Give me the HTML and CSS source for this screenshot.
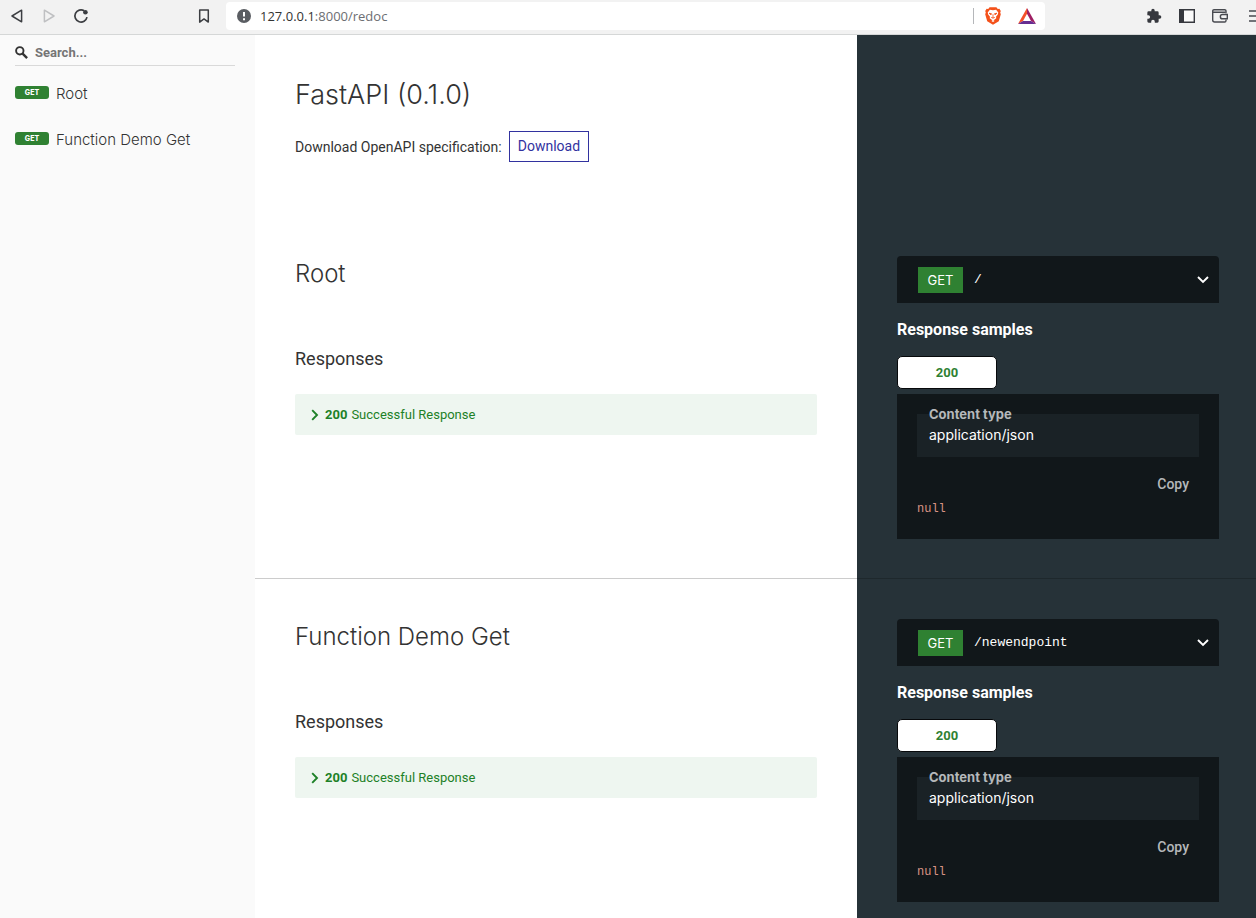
FILE: index.html
```html
<!DOCTYPE html>
<html lang="en">
<head>
<meta charset="utf-8">
<title>FastAPI - ReDoc</title>
<link rel="stylesheet" href="styles.css">
</head>
<body>
<header class="toolbar">
  <nav class="history" aria-label="Browser navigation">
    <button class="icon-btn" aria-label="Back"><svg width="16" height="16" viewBox="0 0 16 16"><path d="M12.6 2.2v11.6L3 8z" fill="none" stroke="#3c3e42" stroke-width="1.5" stroke-linejoin="round"/></svg></button>
    <button class="icon-btn" aria-label="Forward"><svg width="16" height="16" viewBox="0 0 16 16"><path d="M3.4 2.2v11.6L13 8z" fill="none" stroke="#bfc0c2" stroke-width="1.5" stroke-linejoin="round"/></svg></button>
    <button class="icon-btn" aria-label="Reload"><svg width="16" height="16" viewBox="0 0 16 16"><path d="M14 9.2A6.1 6.1 0 1 1 11.2 2.8" fill="none" stroke="#3c3e42" stroke-width="1.7"/><circle cx="12.4" cy="4.2" r="2.3" fill="#3c3e42"/></svg></button>
  </nav>
  <button class="icon-btn" aria-label="Bookmark"><svg width="16" height="16" viewBox="0 0 16 16"><path d="M3.7 2.1h8.6v12L8 10.9l-4.3 3.2z" fill="none" stroke="#3c3e42" stroke-width="1.5" stroke-linejoin="round"/></svg></button>
  <div class="address">
    <svg width="14" height="14" viewBox="0 0 14 14" aria-hidden="true"><circle cx="7" cy="7" r="7" fill="#5a5d62"/><path d="M7 3v4.6M7 9.3v1.9" stroke="#fff" stroke-width="2"/></svg>
    <span class="url">127.0.0.1<span class="url-path">:8000/redoc</span></span>
    <span class="divider"></span>
    <button class="icon-btn" aria-label="Brave Shields"><svg width="16" height="18" viewBox="0 0 16 18"><path d="M4.6.3h6.8l1.4 1.6 1.6-.1 1.4 2.3-.6 1.4.6 1.7-2 7.1L8 17.8l-5.8-3.5-2-7.1.6-1.7L.2 4.1l1.4-2.3 1.6.1z" fill="#f4511a"/><path d="M8 3.3l3.1-.6 2.2 2.7-.5 2.1-1.8 2.2.3 1.6-3.3 2.5-3.3-2.5.3-1.6-1.8-2.2-.5-2.1 2.2-2.7z" fill="#fff"/><path d="M4 6.2l2.5.5-.5 1.1zM12 6.2l-2.5.5.5 1.1zM8 7.2v3M6.2 10.4L8 11.2l1.8-.8" fill="#f4511a" stroke="#f4511a" stroke-width=".8"/><path d="M6.4 14l1.6-1 1.6 1L8 15z" fill="#fff"/></svg></button>
    <button class="icon-btn" aria-label="Brave Rewards"><svg width="18" height="16" viewBox="0 0 18 16"><path d="M9 0L0 16l5-3 4-7.2z" fill="#f4502a"/><path d="M9 0l9 16-5-3-4-7.2z" fill="#9e1f63"/><path d="M0 16l5-3h8l5 3z" fill="#662d91"/></svg></button>
  </div>
  <div class="tools">
    <button class="icon-btn" aria-label="Extensions"><svg width="16" height="16" viewBox="0 0 24 24"><path d="M20.5 11H19V7a2 2 0 0 0-2-2h-4V3.5a2.5 2.5 0 0 0-5 0V5H4a2 2 0 0 0-2 2v3.8h1.5a2.7 2.7 0 0 1 0 5.4H2V20a2 2 0 0 0 2 2h3.8v-1.5a2.7 2.7 0 0 1 5.4 0V22H17a2 2 0 0 0 2-2v-4h1.5a2.5 2.5 0 0 0 0-5z" fill="#36383e"/></svg></button>
    <button class="icon-btn" aria-label="Sidebar"><svg width="16" height="14" viewBox="0 0 16 14"><path d="M.7.7h14.6v12.6H.7z" fill="#fafafa" stroke="#36383e" stroke-width="1.4"/><path d="M0 0h5v14H0z" fill="#36383e"/></svg></button>
    <button class="icon-btn" aria-label="Wallet"><svg width="16" height="14" viewBox="0 0 16 14" fill="none" stroke="#484a50" stroke-width="1.4"><path d="M14 4.2V2A1.3 1.3 0 0 0 12.7.7H2A1.3 1.3 0 0 0 .7 2v9a2 2 0 0 0 2 2h10a1.3 1.3 0 0 0 1.3-1.2v-1M.7 3.2h12.5M10.5 5.5h4.8v4.3h-4.8a2.15 2.15 0 0 1 0-4.3z"/></svg></button>
    <button class="icon-btn menu-btn" aria-label="Menu"><svg width="7" height="14" viewBox="0 0 7 14"><path d="M0 2h7M0 7h7M0 12h7" stroke="#484a50" stroke-width="1.6"/></svg></button>
  </div>
</header>

<div class="page">
  <aside class="sidebar">
    <div class="search">
      <label for="search" aria-label="Search"><svg width="13" height="13" viewBox="0 0 13 13"><circle cx="4.8" cy="4.8" r="3.7" fill="none" stroke="#333" stroke-width="1.9"/><path d="M7.6 7.6l4.5 4.5" stroke="#333" stroke-width="2.4"/></svg></label>
      <input id="search" type="text" placeholder="Search...">
    </div>
    <nav class="menu" aria-label="Operations">
      <a class="menu-item" href="#root"><span class="badge">GET</span><span>Root</span></a>
      <a class="menu-item" href="#demo"><span class="badge">GET</span><span>Function Demo Get</span></a>
    </nav>
  </aside>

  <main class="content">
    <section class="row intro">
      <div class="doc">
        <h1>FastAPI (0.1.0)</h1>
        <p class="spec">Download OpenAPI specification: <a class="download" href="#openapi">Download</a></p>
      </div>
    </section>

    <section class="row operation" id="root">
      <div class="doc">
        <h2>Root</h2>
        <h3>Responses</h3>
        <button class="response"><svg width="8" height="12" viewBox="0 0 8 12"><path d="M1.2 1.2L6 6l-4.8 4.8" fill="none" stroke="#1d8127" stroke-width="1.9"/></svg><strong>200</strong><span>Successful Response</span></button>
      </div>
      <div class="samples">
        <button class="endpoint"><span class="verb">GET</span><span class="path">/</span><svg width="12" height="8" viewBox="0 0 12 8"><path d="M1 1l5 5 5-5" fill="none" stroke="#fff" stroke-width="1.9"/></svg></button>
        <h3>Response samples</h3>
        <button class="tab">200</button>
        <div class="panel">
          <div class="field"><span class="field-label">Content type</span>application/json</div>
          <button class="copy">Copy</button>
          <code class="json">null</code>
        </div>
      </div>
    </section>

    <section class="row operation" id="demo">
      <div class="doc">
        <h2>Function Demo Get</h2>
        <h3>Responses</h3>
        <button class="response"><svg width="8" height="12" viewBox="0 0 8 12"><path d="M1.2 1.2L6 6l-4.8 4.8" fill="none" stroke="#1d8127" stroke-width="1.9"/></svg><strong>200</strong><span>Successful Response</span></button>
      </div>
      <div class="samples">
        <button class="endpoint"><span class="verb">GET</span><span class="path">/newendpoint</span><svg width="12" height="8" viewBox="0 0 12 8"><path d="M1 1l5 5 5-5" fill="none" stroke="#fff" stroke-width="1.9"/></svg></button>
        <h3>Response samples</h3>
        <button class="tab">200</button>
        <div class="panel">
          <div class="field"><span class="field-label">Content type</span>application/json</div>
          <button class="copy">Copy</button>
          <code class="json">null</code>
        </div>
      </div>
    </section>
  </main>
</div>
</body>
</html>
```

FILE: styles.css
```css
* { box-sizing: border-box; }

body {
  margin: 0;
  height: 100vh;
  display: flex;
  flex-direction: column;
  overflow: hidden;
  background: #fff;
  color: #333;
  font-family: Roboto, sans-serif;
  font-size: 14px;
}

button {
  margin: 0;
  padding: 0;
  border: 0;
  background: none;
  font: inherit;
  color: inherit;
}

h1, h2, h3, p { margin: 0; }
svg { display: block; flex: none; }

/* Browser toolbar */
.toolbar {
  flex: none;
  height: 35px;
  display: flex;
  align-items: center;
  padding-bottom: 2px;
  background: #f2f2f2;
  border-bottom: 1px solid #d5d7d7;
}

.history { display: flex; gap: 16px; padding-left: 9px; margin-right: 107px; }

.address {
  flex: 1;
  height: 28px;
  display: flex;
  align-items: center;
  margin-left: 14px;
  padding: 0 9px 0 11px;
  border-radius: 4px;
  background: #fff;
}

.url {
  flex: 1;
  margin-left: 9px;
  font-family: "Open Sans", sans-serif;
  font-size: 13px;
  line-height: 20px;
  color: #333;
}

.url-path { color: #6c6e72; }
.divider { width: 1px; height: 16px; margin-right: 11px; background: #b5b7ba; }
.address .icon-btn + .icon-btn { margin-left: 17px; }
.tools { display: flex; align-items: center; gap: 17px; margin-left: 101px; }
.menu-btn { margin-left: 4px; }

/* Layout */
.page { flex: 1; min-height: 0; display: flex; }

.sidebar { flex: none; width: 255px; background: #fafafa; }

.content {
  flex: 1;
  min-width: 0;
  overflow: hidden;
  background: linear-gradient(to right, #fff 0 602px, #263238 602px);
}

.row {
  display: grid;
  grid-template-columns: 602px 1fr;
  position: relative;
}

/* Sidebar */
.search {
  display: flex;
  align-items: center;
  gap: 7px;
  height: 31px;
  margin: 0 20px 0 15px;
  padding-top: 5px;
  border-bottom: 1px solid #d9d9d9;
}

.search input {
  flex: 1;
  min-width: 0;
  padding: 0;
  border: 0;
  outline: 0;
  background: none;
  font: bold 13px/20px Roboto, sans-serif;
  color: #333;
}

.search input::placeholder { color: #757575; opacity: 1; }

.menu { display: grid; gap: 22px; padding: 16px 15px; }

.menu-item {
  display: flex;
  gap: 7px;
  font: 300 15px/24px Inter, sans-serif;
  color: #333;
  text-decoration: none;
}

.badge {
  width: 34px;
  height: 13px;
  margin-top: 4px;
  border-radius: 3px;
  background: #2f8132;
  color: #fff;
  font: 800 7px/13px Inter, sans-serif;
  text-align: center;
}

/* Documentation column */
.doc { padding: 40px; }
.intro { min-height: 181px; }

h1 { font: 300 27px/40px Inter, sans-serif; }
h2 { font: 300 24px/36px Inter, sans-serif; }

.spec { display: flex; align-items: center; gap: 7px; margin-top: 16px; }

.download {
  padding: 0 8px;
  border: 1px solid #32329f;
  color: #32329f;
  line-height: 29px;
  text-decoration: none;
}

.doc h3 { margin-top: 55px; font-size: 18px; font-weight: 400; line-height: 24px; }

.response {
  width: 100%;
  height: 41px;
  display: flex;
  align-items: center;
  margin-top: 23px;
  padding: 0 16px;
  border-radius: 2px;
  background: #eef6f0;
  color: #1d8127;
  font-size: 13px;
}

.response strong { margin: 0 4px 0 6px; line-height: 20px; }

/* Samples column */
.samples { padding: 40px 37px 40px 40px; }

.operation:not(:last-child)::after {
  content: "";
  position: absolute;
  inset: auto 0 0;
  border-bottom: 1px solid rgba(0, 0, 0, .2);
}

.endpoint {
  width: 100%;
  height: 47px;
  display: flex;
  align-items: center;
  padding: 0 10px 0 21px;
  border-radius: 4px 4px 0 0;
  background: #11171a;
  color: #fff;
}

.verb {
  width: 45px;
  background: #2f8132;
  font: 400 13px/26px Inter, sans-serif;
}

.path {
  flex: 1;
  margin-left: 11px;
  font: 13px/20px "Liberation Mono", monospace;
  text-align: left;
}

.samples h3 { margin: 17px 0 16px; font-size: 16px; font-weight: 700; line-height: 20px; color: #fff; }

.tab {
  width: 100px;
  height: 33px;
  display: block;
  border: 1px solid #07090b;
  border-radius: 5px;
  background: #fff;
  color: #2f8132;
  font-size: 13px;
  font-weight: 700;
}

.panel {
  display: flex;
  flex-direction: column;
  margin-top: 5px;
  padding: 20px;
  background: #11171a;
}

.field {
  position: relative;
  height: 43px;
  padding: 11px 12px;
  background: #1a2226;
  color: #fff;
  font: 400 14px/20px Inter, sans-serif;
}

.field-label {
  position: absolute;
  left: 12px;
  top: -8px;
  color: #b5b8ba;
  font-size: 13px;
  font-weight: 700;
  line-height: 16px;
}

.copy {
  align-self: flex-end;
  margin: 17px 10px 5px 0;
  color: #b5b8ba;
  font-weight: 500;
  line-height: 20px;
}

.json { font: 12px/20px "Liberation Mono", monospace; color: #d99384; }
```
